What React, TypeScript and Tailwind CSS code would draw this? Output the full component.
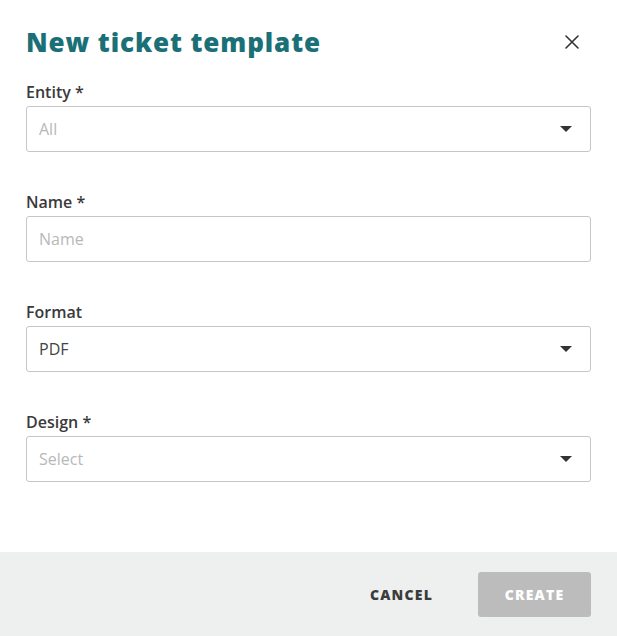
import React from "react";

const Caret = () => (
  <svg width="12" height="6" viewBox="0 0 12 6" className="shrink-0">
    <path d="M0 0 L12 0 L6 6 Z" fill="#333333" />
  </svg>
);

function Field({
  label,
  placeholder,
  value,
  select,
}: {
  label: string;
  placeholder?: string;
  value?: string;
  select?: boolean;
}) {
  return (
    <div className="flex flex-col">
      <div className="text-[16px] leading-[22px] font-semibold text-[#3a3a3a]">{label}</div>
      <div className="mt-[3px] h-[46px] border border-[#c6c6c6] rounded-[3px] flex items-center pl-[12px] pr-[18px] justify-between">
        <span className={value ? "text-[16px] text-[#444444]" : "text-[16px] text-[#b8b8b8]"}>
          {value ?? placeholder}
        </span>
        {select && <Caret />}
      </div>
    </div>
  );
}

export default function App() {
  return (
    <div className="w-[617px] h-[636px] bg-white flex flex-col" style={{ fontFamily: '"Open Sans", sans-serif' }}>
      <div className="flex-1 px-[26px] pt-[26px]">
        <div className="flex items-center justify-between h-[32px]">
          <h1 className="text-[26px] font-extrabold text-[#1b7077] tracking-[0.9px]">New ticket template</h1>
          <svg width="14" height="14" viewBox="0 0 14 14" className="mr-[12px]">
            <path d="M1 1 L13 13 M13 1 L1 13" stroke="#333" strokeWidth="1.6" strokeLinecap="round" />
          </svg>
        </div>
        <div className="mt-[23px] flex flex-col gap-[39px]">
          <Field label="Entity *" placeholder="All" select />
          <Field label="Name *" placeholder="Name" />
          <Field label="Format" value="PDF" select />
          <Field label="Design *" placeholder="Select" select />
        </div>
      </div>
      <div className="h-[84px] bg-[#eef0ef] flex items-center justify-end px-[26px] gap-[45px]">
        <button className="text-[14px] font-extrabold text-[#3b3b3b] tracking-[1.2px]">CANCEL</button>
        <button className="w-[113px] h-[45px] rounded-[3px] bg-[#bcbcbc] text-white text-[14px] font-extrabold tracking-[1.2px]">
          CREATE
        </button>
      </div>
    </div>
  );
}
